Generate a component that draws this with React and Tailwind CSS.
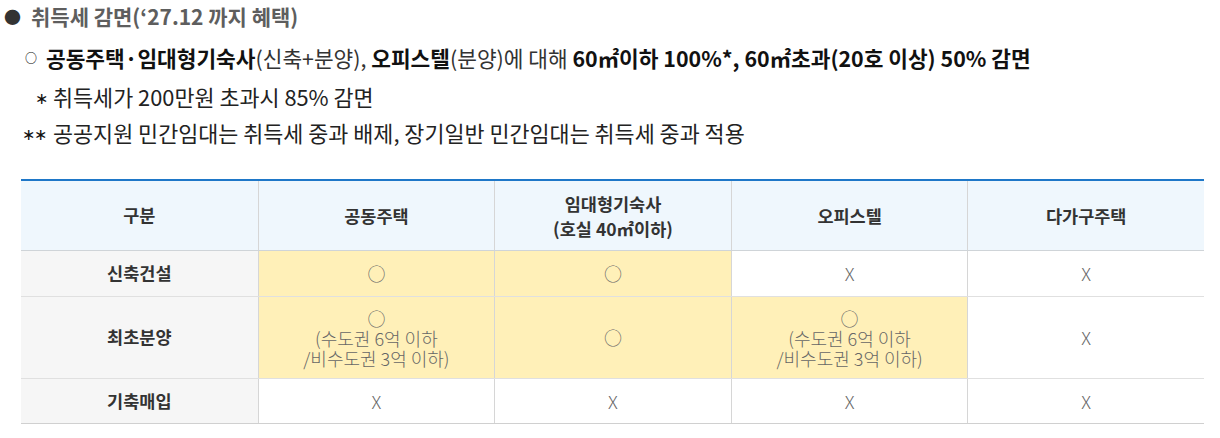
import React from 'react'

const font = { fontFamily: '"Noto Sans CJK KR", "Noto Sans", sans-serif' }

const cols = ['공동주택', '임대형기숙사', '오피스텔', '다가구주택']

const Yes = () => <span>○</span>
const No = () => <span>X</span>

const Limit = () => (
  <div className="leading-[20px]">
    <div>○</div>
    <div>(수도권 6억 이하</div>
    <div>/비수도권 3억 이하)</div>
  </div>
)

const rows = [
  { label: '신축건설', cells: [<Yes />, <Yes />, <No />, <No />], hl: [true, true, false, false], h: 'h-[45px]' },
  { label: '최초분양', cells: [<Limit />, <Yes />, <Limit />, <No />], hl: [true, true, true, false], h: 'h-[82px]' },
  { label: '기축매입', cells: [<No />, <No />, <No />, <No />], hl: [false, false, false, false], h: 'h-[45px]' },
]

export default function App() {
  return (
    <div className="bg-white w-[1220px] h-[438px] overflow-hidden" style={font}>
      <div className="pl-[4px] pt-[1px]">
        <div className="flex items-center h-[32px] text-[21px] font-bold text-[#5e5e5e]">
          <span className="w-[27px] shrink-0 text-[#333] text-[17px]">●</span>
          <span>취득세 감면(‘27.12 까지 혜택)</span>
        </div>

        <div className="flex items-center h-[50px] pl-[21px] text-[21.4px] text-[#111]">
          <span className="w-[21px] shrink-0 text-[12px] font-bold">○</span>
          <span>
            <b>공동주택·임대형기숙사</b>
            <span className="text-[#333]">(신축+분양), </span>
            <b>오피스텔</b>
            <span className="text-[#333]">(분양)에 대해 </span>
            <b>60㎡이하 100%*, 60㎡초과(20호 이상) 50% 감면</b>
          </span>
        </div>

        <div className="flex items-center h-[28px] pl-[31px] text-[21.8px] text-[#222]">
          <span className="w-[18px] shrink-0 text-[16px] text-[#111]">∗</span>
          <span>취득세가 200만원 초과시 85% 감면</span>
        </div>

        <div className="flex items-center h-[44px] pl-[18px] text-[21.8px] text-[#222]">
          <span className="w-[31px] shrink-0 text-[16px] text-[#111] tracking-[-1px]">∗∗</span>
          <span>공공지원 민간임대는 취득세 중과 배제, 장기일반 민간임대는 취득세 중과 적용</span>
        </div>
      </div>

      <div className="ml-[21px] mt-[24px] w-[1183px] border-t-2 border-[#1e77c8] border-b border-b-[#d0d0d0] text-[17.5px]">
        <div className="grid grid-cols-5 h-[70px] bg-[#eff7fd] font-bold text-[#333] border-b border-[#cfd4d8]">
          <div className="flex items-center justify-center">구분</div>
          {cols.map((c, i) => (
            <div key={c} className="flex items-center justify-center text-center border-l border-[#d6d6d6] leading-[25px]">
              {i === 1 ? (
                <div>
                  임대형기숙사
                  <br />
                  (호실 40㎡이하)
                </div>
              ) : (
                c
              )}
            </div>
          ))}
        </div>
        {rows.map((r, ri) => (
          <div key={r.label} className={`grid grid-cols-5 ${r.h} ${ri > 0 ? 'border-t border-[#e0e0e0]' : ''}`}>
            <div className="flex items-center justify-center bg-[#f6f6f6] font-bold text-[#333]">{r.label}</div>
            {r.cells.map((c, ci) => (
              <div
                key={ci}
                className={`flex items-center justify-center text-center border-l border-[#d6d6d6] text-[18px] text-[#666] font-light ${
                  r.hl[ci] ? 'bg-[#fff0b8]' : 'bg-white'
                }`}
              >
                {c}
              </div>
            ))}
          </div>
        ))}
      </div>
    </div>
  )
}
